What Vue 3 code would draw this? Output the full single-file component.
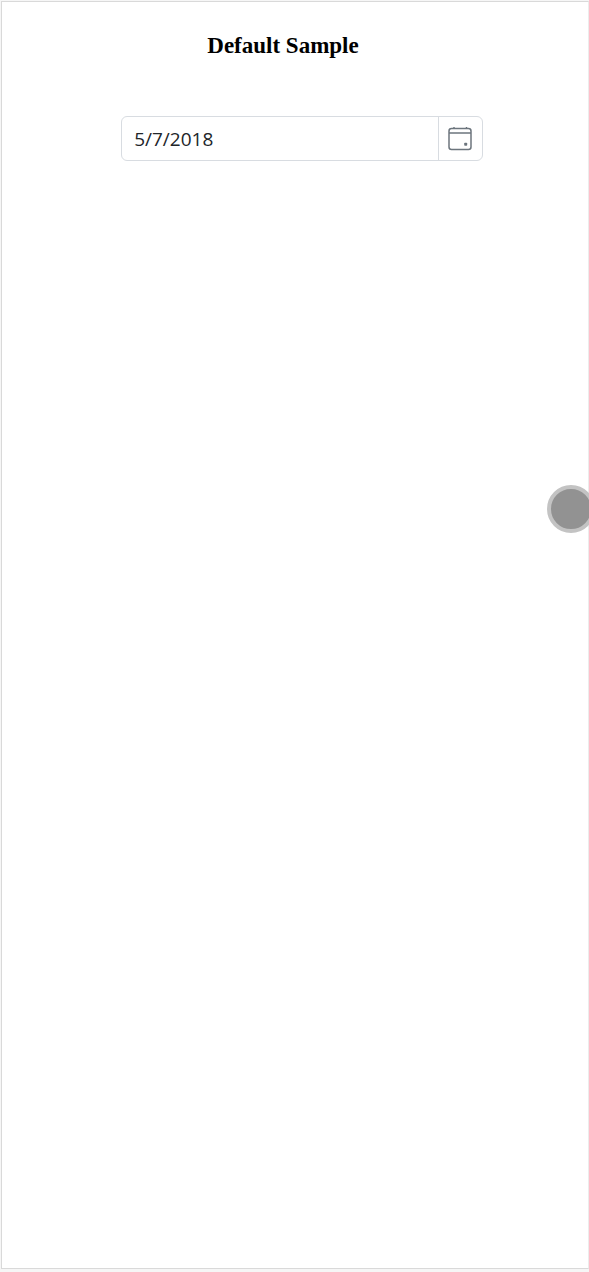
<script setup>
import { ref } from 'vue'

const date = ref('5/7/2018')
</script>

<template>
  <main class="page">
    <h1 class="title" id="sample-title">Default Sample</h1>
    <div class="date-picker">
      <input
        v-model="date"
        class="date-input"
        type="text"
        autocomplete="off"
        aria-labelledby="sample-title"
      />
      <button class="date-btn" type="button" aria-label="select">
        <svg width="24" height="24" viewBox="0 0 24 24" fill="none" stroke="#6c757d">
          <rect x="1" y="1.5" width="22" height="21" rx="2.5" stroke-width="1.5" />
          <path d="M1 6H23M6 0V2M18.5 0V2" stroke-width="1.4" />
          <rect x="16.2" y="15.8" width="3" height="3" rx="0.8" fill="#6c757d" stroke="none" />
        </svg>
      </button>
    </div>
    <button class="touch-handle" type="button" aria-label="menu"></button>
  </main>
</template>

<style>
body {
  margin: 0;
  background: #f6f6f6;
}
</style>

<style scoped>
.page {
  box-sizing: border-box;
  min-height: calc(100vh - 4px);
  margin: 1px 0 3px 1px;
  padding: 31px 20px 32px 34px;
  border: 1px solid #d9d9d9;
  border-right-color: #ececec;
  background: #fff;
}

.title {
  margin: 0 40px 57px 2px;
  font-family: "Liberation Serif", "Times New Roman", serif;
  font-size: 23px;
  line-height: 26px;
  font-weight: 700;
  text-align: center;
  color: #000;
}

.date-picker {
  box-sizing: border-box;
  display: flex;
  width: 68%;
  min-width: 240px;
  height: 45px;
  margin: 0 auto;
  border: 1px solid #d8dce1;
  border-radius: 6px;
  overflow: hidden;
}

.date-input {
  flex: 1;
  min-width: 0;
  padding: 0 12px;
  border: 0;
  outline: none;
  background: transparent;
  font-family: "Open Sans", "Noto Sans", sans-serif;
  font-size: 19px;
  color: #212529;
}

.date-btn {
  display: flex;
  align-items: center;
  justify-content: center;
  width: 44px;
  padding: 0;
  border: 0;
  border-left: 1px solid #d8dce1;
  background: transparent;
  cursor: pointer;
}

.touch-handle {
  position: fixed;
  top: 485px;
  right: -6px;
  width: 48px;
  height: 48px;
  padding: 0;
  border: 4px solid #c3c3c3;
  border-radius: 50%;
  background: #929292;
}
</style>
